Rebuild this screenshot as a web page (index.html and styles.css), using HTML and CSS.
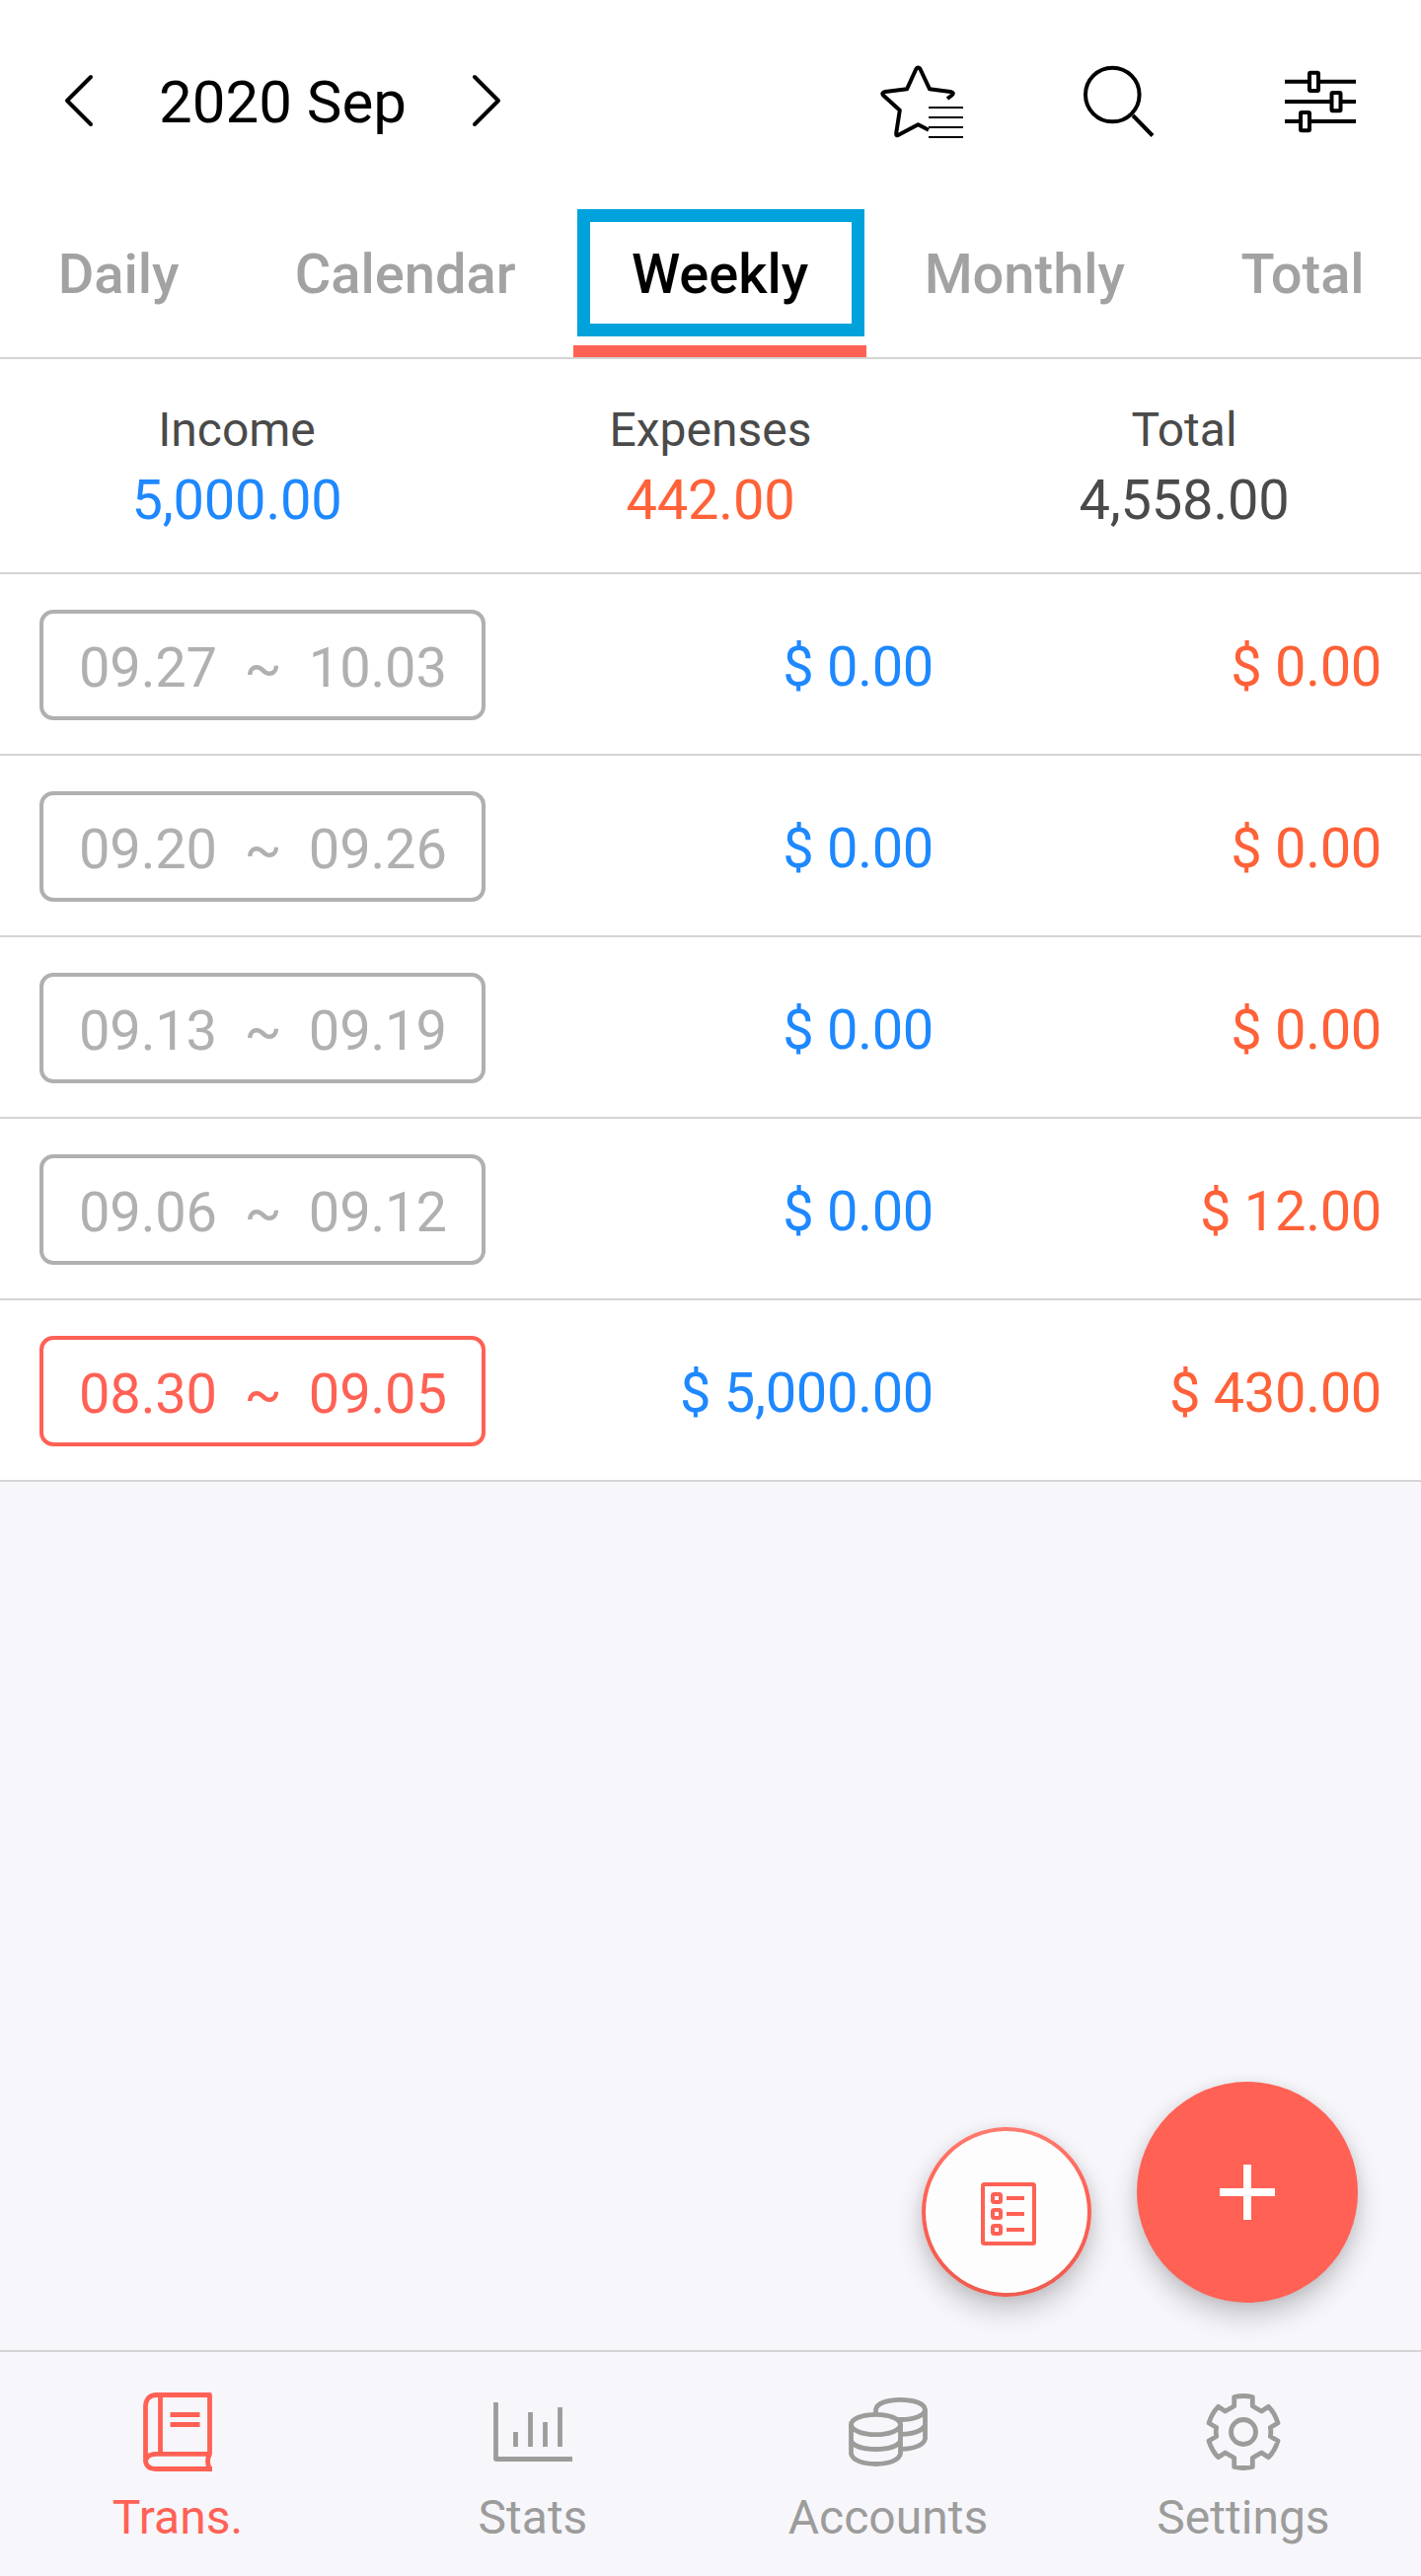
FILE: index.html
```
<!DOCTYPE html>
<html lang="en">
<head>
  <meta charset="UTF-8">
  <title>Money Manager - Weekly</title>
  <meta name="viewport" content="width=device-width, initial-scale=1.0">
  <link rel="stylesheet" href="styles.css">
</head>
<body>

  <header class="topbar">
    <div class="month">
      <svg class="chevron" width="32" height="56" viewBox="0 0 32 56"><path d="M28 4L4 28L28 52"/></svg>
      <h1>2020 Sep</h1>
      <svg class="chevron" width="32" height="56" viewBox="0 0 32 56"><path d="M4 4L28 28L4 52"/></svg>
    </div>
    <div class="actions">
      <svg class="icon-star" width="84" height="76" viewBox="0 0 84 76">
        <path d="M68 34L72 31Q76 28 71 26.900L50.100 24.300L40.500 4Q38.400 1 36.300 4L27 24.300L5 26.900Q1 28 3 30.500L19.800 45.700L16.200 69Q16 72.500 19 70.500L38.400 60.300L49 65.700"/>
        <path class="thin" d="M49 43H84M49 53H84M49 63H84M49 73H84"/>
      </svg>
      <svg class="icon-search" width="76" height="76" viewBox="0 0 76 76">
        <circle cx="31.300" cy="30" r="27.300"/>
        <path d="M52 51L72 71.500"/>
      </svg>
      <svg class="icon-filter" width="72" height="76" viewBox="0 0 72 76">
        <path d="M0 16.700H24M36 16.700H72M0 37H46M58 37H72M0 57H15M27 57H72"/>
        <rect x="25" y="7.700" width="9" height="18.300" rx="1"/>
        <rect x="47.500" y="28" width="9" height="18.300" rx="1"/>
        <rect x="16" y="48" width="9" height="18.300" rx="1"/>
      </svg>
    </div>
  </header>

  <nav class="tabs">
    <a href="#">Daily</a>
    <a href="#">Calendar</a>
    <a href="#" class="active">Weekly</a>
    <a href="#">Monthly</a>
    <a href="#">Total</a>
  </nav>

  <section class="summary">
    <div><p>Income</p><strong class="income">5,000.00</strong></div>
    <div><p>Expenses</p><strong class="expense">442.00</strong></div>
    <div><p>Total</p><strong>4,558.00</strong></div>
  </section>

  <main>
    <div class="week">
      <span class="range">09.27&nbsp; ~&nbsp; 10.03</span>
      <span class="amount income">$ 0.00</span>
      <span class="amount expense">$ 0.00</span>
    </div>
    <div class="week">
      <span class="range">09.20&nbsp; ~&nbsp; 09.26</span>
      <span class="amount income">$ 0.00</span>
      <span class="amount expense">$ 0.00</span>
    </div>
    <div class="week">
      <span class="range">09.13&nbsp; ~&nbsp; 09.19</span>
      <span class="amount income">$ 0.00</span>
      <span class="amount expense">$ 0.00</span>
    </div>
    <div class="week">
      <span class="range">09.06&nbsp; ~&nbsp; 09.12</span>
      <span class="amount income">$ 0.00</span>
      <span class="amount expense">$ 12.00</span>
    </div>
    <div class="week">
      <span class="range current">08.30&nbsp; ~&nbsp; 09.05</span>
      <span class="amount income">$ 5,000.00</span>
      <span class="amount expense">$ 430.00</span>
    </div>

    <!-- Floating buttons -->
    <div class="floating">
      <button class="fab-list" aria-label="List">
        <svg width="56" height="64" viewBox="0 0 56 64">
          <rect x="2" y="2" width="52" height="60" rx="1.500"/>
          <rect x="12" y="12" width="8" height="8" rx="1.500"/>
          <rect x="12" y="28" width="8" height="8" rx="1.500"/>
          <rect x="12" y="44" width="8" height="8" rx="1.500"/>
          <path d="M26 16H44M26 32H44M26 48H44"/>
        </svg>
      </button>
      <button class="fab-add" aria-label="Add">
        <svg width="56" height="56" viewBox="0 0 56 56"><path d="M28 0V56M0 28H56"/></svg>
      </button>
    </div>
  </main>

  <footer class="bottom-nav">
    <a href="#" class="active">
      <svg width="80" height="80" viewBox="0 0 80 80">
        <path d="M7.500 70V15Q7.500 2.500 19 2.500H72.500V62.300H18Q7.500 63 7.500 70Q9 77.500 18 77.500H75M22.500 2.500V62.300M72.500 62.300Q68.500 70 72.500 77.500"/>
        <path d="M32.500 22.500H62.500M32.500 32.500H62.500"/>
      </svg>
      Trans.
    </a>
    <a href="#">
      <svg width="80" height="80" viewBox="0 0 80 80">
        <path d="M2.500 10V67.500H80M22.500 40V55M37.500 20V55M52.500 30V55M67.500 15V55"/>
      </svg>
      Stats
    </a>
    <a href="#">
      <svg width="80" height="80" viewBox="0 0 80 80">
        <ellipse cx="27.500" cy="32.500" rx="25" ry="10.200"/>
        <path d="M2.500 32.500V62C4 69 15 72.500 27.500 72.500S51 69 52.500 62V32.500M2.500 49C5 54.500 15 57.500 27.500 57.500S50 54.500 52.500 49"/>
        <path d="M27.500 22V17.500C28 11 39 7.300 52.500 7.300S77 11 77.500 17.500C77 23.500 66 27.500 52.500 27.500L49 27.300M77.500 17.500V47C76 53 67 57.300 53 57.300M77.500 33C75 38.500 66 42.300 53 42.300"/>
      </svg>
      Accounts
    </a>
    <a href="#">
      <svg width="80" height="80" viewBox="0 0 80 80">
        <path d="M30.700 4.500Q40 2.500 49.300 4.500V13.700L58.400 19L65.500 14.300Q72 21 75 31L67.300 35.500Q68.300 40 67.300 44.500L75 49Q72 59 65.500 65.700L58.400 61L49.300 66.300V75.500Q40 77.500 30.700 75.500V66.300L21.600 61L14.500 65.700Q8 59 5 49L12.700 44.500Q11.700 40 12.700 35.500L5 31Q8 21 14.500 14.300L21.600 19L30.700 13.700Z"/>
        <circle cx="40" cy="40" r="12.500"/>
      </svg>
      Settings
    </a>
  </footer>

</body>
</html>
```
FILE: styles.css
```
* {
  margin: 0;
  padding: 0;
  box-sizing: border-box;
}

body {
  font-family: Roboto, sans-serif;
  font-size: 56px;
  background: #f7f6fb;
  color: #4a4a4a;
  min-height: 2611px;
  display: flex;
  flex-direction: column;
}

a {
  color: inherit;
  text-decoration: none;
}

svg {
  display: block;
  flex: none;
  fill: none;
  stroke: currentColor;
  stroke-width: 4;
  stroke-linejoin: round;
}

.income {
  color: #1e88ff;
}

.expense {
  color: #ff6138;
}

/* top bar */
.topbar {
  display: flex;
  justify-content: space-between;
  height: 208px;
  padding: 66px 66px 0 64px;
  background: #fff;
  color: #000;
}

.month {
  display: flex;
  align-items: center;
  gap: 62px;
  height: 72px;
}

.month h1 {
  width: 257px;
  font-size: 60px;
  font-weight: 400;
  line-height: 72px;
  padding-top: 4px;
  text-align: center;
  white-space: nowrap;
}

.chevron {
  stroke-linecap: round;
}

.actions {
  display: flex;
}

.icon-search {
  margin: 0 130px 0 120px;
}

.icon-star .thin {
  stroke-width: 2;
}

/* tabs */
.tabs {
  display: flex;
  justify-content: space-between;
  height: 156px;
  background: #fff;
  color: #a2a2a2;
  font-weight: 500;
  line-height: 141px;
  border-bottom: 2px solid #d4d4d4;
}

.tabs a {
  padding: 0 58.7px;
}

.tabs .active {
  position: relative;
  color: #000;
  border-bottom: 12px solid #ff6155;
}

/* frame drawn around the selected tab */
.tabs .active::before {
  content: "";
  position: absolute;
  box-sizing: border-box;
  top: 4px;
  left: 4px;
  right: 2px;
  height: 129px;
  border: 13px solid #00a2db;
}

/* totals */
.summary {
  display: flex;
  height: 218px;
  padding-top: 43px;
  background: #fff;
  border-bottom: 2px solid #d4d4d4;
  text-align: center;
}

.summary div {
  flex: 1;
}

.summary p {
  font-size: 48px;
  line-height: 58px;
}

.summary strong {
  display: block;
  font-weight: 400;
  line-height: 84px;
  letter-spacing: -0.2px;
}

/* week list */
main {
  position: relative;
  flex: 1;
}

.week {
  display: flex;
  align-items: center;
  height: 184px;
  padding: 2px 40px 0;
  background: #fff;
  border-bottom: 2px solid #d4d4d4;
}

.range {
  height: 112px;
  padding: 0 35px 0 36px;
  line-height: 110px;
  letter-spacing: -0.15px;
  color: #b0b0b0;
  border: 4px solid #b0b0b0;
  border-radius: 14px;
  white-space: pre;
}

.range.current {
  color: #ff6155;
  border-color: #ff6155;
}

.amount {
  padding-top: 4px;
  text-align: right;
  line-height: 72px;
  letter-spacing: -0.3px;
}

.amount.income {
  flex: 1;
}

.amount.expense {
  width: 454px;
}

/* floating buttons */
.floating {
  position: absolute;
  right: 64px;
  bottom: 48px;
  display: flex;
  align-items: flex-end;
  gap: 46px;
}

.floating button {
  display: flex;
  align-items: center;
  justify-content: center;
  border-radius: 50%;
  box-shadow: 0 14px 28px rgba(0, 0, 0, 0.2), 0 2px 14px rgba(0, 0, 0, 0.08);
}

.fab-list {
  width: 172px;
  height: 172px;
  margin-bottom: 6px;
  padding: 4px 0 0 4px;
  background: linear-gradient(#fdfdfd, #fdfdfd) padding-box, linear-gradient(#ff7b6f, #ff6155 40%, #ee5c50) border-box;
  color: #ff6155;
  border: 4px solid transparent;
}

.fab-add {
  width: 224px;
  height: 224px;
  background: #ff6155;
  color: #fff;
  border: none;
}

.fab-add svg {
  stroke-width: 8;
}

/* bottom navigation */
.bottom-nav {
  display: flex;
  height: 229px;
  padding-top: 41px;
  border-top: 2px solid #d4d4d4;
  color: #9c9c9b;
  font-size: 48px;
  line-height: 58px;
}

.bottom-nav a {
  flex: 1;
  display: flex;
  flex-direction: column;
  align-items: center;
  gap: 18px;
}

.bottom-nav .active {
  color: #ff6155;
}

.bottom-nav svg {
  stroke-width: 4.800;
}
```
